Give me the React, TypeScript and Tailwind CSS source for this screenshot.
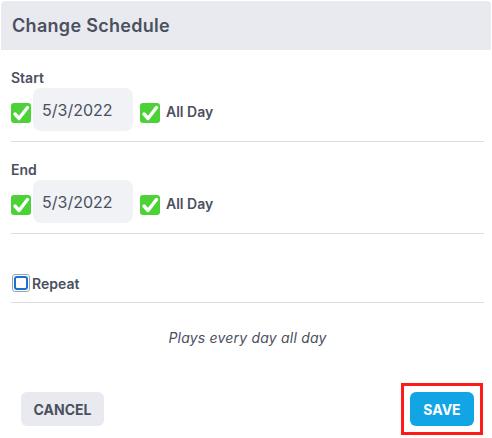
import React from 'react';

function GreenCheck() {
  return (
    <span className="mt-[6px] flex h-5 w-5 shrink-0 items-center justify-center rounded-[3px] bg-[#4cd137]">
      <svg viewBox="0 0 20 20" className="h-5 w-5">
        <path
          d="M4 11 L8 15.5 L16.5 4.5"
          fill="none"
          stroke="#fff"
          strokeWidth="3.4"
          strokeLinecap="round"
          strokeLinejoin="round"
        />
      </svg>
    </span>
  );
}

function DateRow({ label, date }: { label: string; date: string }) {
  return (
    <div className="border-b border-[#dcdcdc] pb-[10px]">
      <div className="text-[14px] font-semibold leading-5 text-[#4b5060]">{label}</div>
      <div className="flex items-center">
        <GreenCheck />
        <div className="ml-[2px] flex h-[43px] w-[100px] items-center rounded-lg bg-[#f0f2f5] pl-[9px] text-[16px] text-[#4b5060]">
          {date}
        </div>
        <span className="ml-[7px] flex">
          <GreenCheck />
        </span>
        <span className="ml-[6px] mt-[3px] text-[14px] font-semibold text-[#4b5060]">All Day</span>
      </div>
    </div>
  );
}

export default function App() {
  return (
    <div className="h-[438px] w-[492px] bg-white font-['Inter',sans-serif] text-[#4b5060]">
      <div className="ml-px pt-px">
        {/* Header */}
        <div className="flex h-[49px] w-[490px] items-center rounded-t-[4px] bg-[#e8eaef] px-[11px]">
          <h2 className="text-[18px] font-semibold tracking-[0.3px]">Change Schedule</h2>
        </div>

        <div className="pl-[10px] pr-[8px] pt-[18px]">
          <DateRow label="Start" date="5/3/2022" />
          <div className="mt-[18px]">
            <DateRow label="End" date="5/3/2022" />
          </div>

          {/* Repeat */}
          <div className="mt-[39px] flex h-[30px] items-start border-b border-[#dcdcdc]">
            <div className="flex h-5 items-center">
              <span className="ml-px h-[18px] w-[18px] rounded-[3px] border border-[#9aa3b5] p-[1px]">
                <span className="block h-full w-full rounded-[3px] border-2 border-[#1f6fd1]" />
              </span>
              <span className="ml-[2px] text-[14px] font-semibold">Repeat</span>
            </div>
          </div>

          <p className="mt-[25px] text-center text-[14px] leading-5 italic tracking-[0.2px] text-[#4b5060]">
            Plays every day all day
          </p>

          {/* Actions */}
          <div className="mt-[35px] flex items-center justify-between pl-[10px]">
            <button className="h-[34px] w-[83px] rounded-md bg-[#e8eaef] text-[14px] font-bold text-[#4b5060]">
              CANCEL
            </button>
            <div className="mr-px border-[3px] border-[#ff1a1a] p-[6px]">
              <button className="block h-[34px] w-[64px] rounded-md bg-[#12a5e6] text-[14px] font-bold text-white">
                SAVE
              </button>
            </div>
          </div>
        </div>
      </div>
    </div>
  );
}
